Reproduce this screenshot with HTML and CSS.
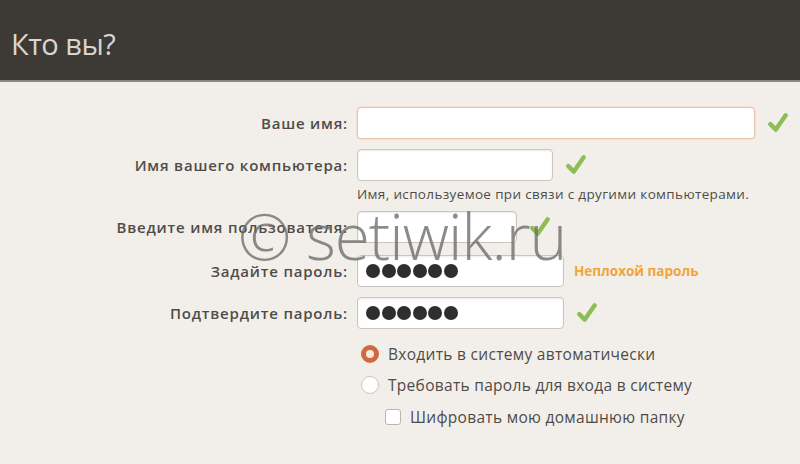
FILE: index.html
```html
<!DOCTYPE html>
<html lang="ru">
<head>
    <meta charset="UTF-8">
    <title>Кто вы?</title>
    <link rel="stylesheet" href="styles.css">
</head>
<body>

<div class="header">
    <h1>Кто вы?</h1>
</div>

<form class="who-form">
    <div class="row row-name">
        <label for="name">Ваше имя:</label>
        <input type="text" id="name" class="field field-wide field-focus">
        <svg class="check" viewBox="0 0 20 20"><path d="M3 11 L8 16 L17 3"/></svg>
    </div>

    <div class="row row-host">
        <label for="host">Имя вашего компьютера:</label>
        <input type="text" id="host" class="field field-host">
        <svg class="check" viewBox="0 0 20 20"><path d="M3 11 L8 16 L17 3"/></svg>
    </div>
    <div class="hint">Имя, используемое при связи с другими компьютерами.</div>

    <div class="row row-user">
        <label for="user">Введите имя пользователя:</label>
        <input type="text" id="user" class="field field-user">
        <svg class="check" viewBox="0 0 20 20"><path d="M3 11 L8 16 L17 3"/></svg>
    </div>

    <div class="row row-pass">
        <label for="pass">Задайте пароль:</label>
        <div class="field field-pass" id="pass">
            <span class="dot"></span><span class="dot"></span><span class="dot"></span><span class="dot"></span><span class="dot"></span><span class="dot"></span>
        </div>
        <span class="strength">Неплохой пароль</span>
    </div>

    <div class="row row-confirm">
        <label for="confirm">Подтвердите пароль:</label>
        <div class="field field-pass" id="confirm">
            <span class="dot"></span><span class="dot"></span><span class="dot"></span><span class="dot"></span><span class="dot"></span><span class="dot"></span>
        </div>
        <svg class="check" viewBox="0 0 20 20"><path d="M3 11 L8 16 L17 3"/></svg>
    </div>

    <div class="options">
        <div class="option">
            <span class="radio radio-on"></span>
            <span>Входить в систему автоматически</span>
        </div>
        <div class="option">
            <span class="radio"></span>
            <span>Требовать пароль для входа в систему</span>
        </div>
        <div class="option option-sub">
            <span class="box"></span>
            <span>Шифровать мою домашнюю папку</span>
        </div>
    </div>
</form>

<div class="watermark">© setiwik.ru</div>

</body>
</html>
```

FILE: styles.css
```css
body {
    margin: 0;
    background: #f2efeb;
    font-family: "Open Sans", "DejaVu Sans", sans-serif;
    color: #555;
    position: relative;
    height: 464px;
    overflow: hidden;
}

.header {
    background: #3d3a36;
    border-bottom: 2px solid #8a8680;
    box-sizing: border-box;
    height: 82px;
}

h1 {
    margin: 0;
    padding: 24px 0 0 11px;
    font-size: 29px;
    font-weight: 400;
    color: #d9d6d0;
    letter-spacing: -0.5px;
}

.who-form {
    padding-top: 25px;
}

.row {
    display: flex;
    align-items: center;
    height: 32px;
}

.row label {
    width: 348px;
    flex-shrink: 0;
    text-align: right;
    font-size: 15px;
    font-weight: 600;
    color: #4f4c48;
    margin-right: 9px;
    letter-spacing: 0.8px;
    white-space: nowrap;
}

.field {
    box-sizing: border-box;
    height: 32px;
    border: 1px solid #c9c6c0;
    border-radius: 4px;
    background: #fff;
    box-shadow: inset 0 1px 2px rgba(0,0,0,0.08);
}

.field-wide { width: 398px; }
.field-host { width: 196px; }
.field-user { width: 160px; }
.field-pass { width: 207px; }

.field-focus {
    border-color: #ecc2a8;
    box-shadow: 0 0 0 1px #f6e0d2;
}

.check {
    width: 22px;
    height: 22px;
    margin-left: 12px;
}

.check path {
    fill: none;
    stroke: #8dbd55;
    stroke-width: 4;
    stroke-linecap: round;
    stroke-linejoin: round;
}

.row-host { margin-top: 10px; }

.hint {
    margin: 4px 0 0 357px;
    font-size: 13.5px;
    color: #4f4c48;
    height: 20px;
    letter-spacing: 0.35px;
    white-space: nowrap;
}

.row-user { margin-top: 6px; }
.row-pass { margin-top: 12px; }
.row-confirm { margin-top: 10px; }

.field-pass {
    display: flex;
    align-items: center;
    gap: 1.5px;
    padding-left: 8px;
}

.dot {
    width: 14px;
    height: 14px;
    border-radius: 50%;
    background: #2e2e2e;
}

.strength {
    margin-left: 10px;
    font-size: 13.5px;
    font-weight: 700;
    color: #f0a43a;
}

.options {
    margin: 9px 0 0 361px;
}

.option {
    display: flex;
    align-items: center;
    height: 31px;
    font-size: 15.5px;
    color: #4f4c48;
    letter-spacing: 0.3px;
}

.option-sub {
    margin-left: 24px;
    height: 33px;
}

.radio {
    box-sizing: border-box;
    width: 18px;
    height: 18px;
    border-radius: 50%;
    border: 1px solid #c9c6c0;
    background: #fff;
    margin-right: 9px;
}

.radio-on {
    border: 5px solid #d06a3c;
    background: #fbe9e0;
}

.box {
    box-sizing: border-box;
    width: 16px;
    height: 16px;
    border-radius: 3px;
    border: 1px solid #b9b6b0;
    background: #fff;
    margin-right: 9px;
}

.watermark {
    position: absolute;
    left: 238px;
    top: 192px;
    font-size: 64px;
    font-family: "Open Sans", sans-serif;
    font-weight: 300;
    color: rgba(110, 110, 110, 0.8);
    letter-spacing: -1px;
    pointer-events: none;
}
```
